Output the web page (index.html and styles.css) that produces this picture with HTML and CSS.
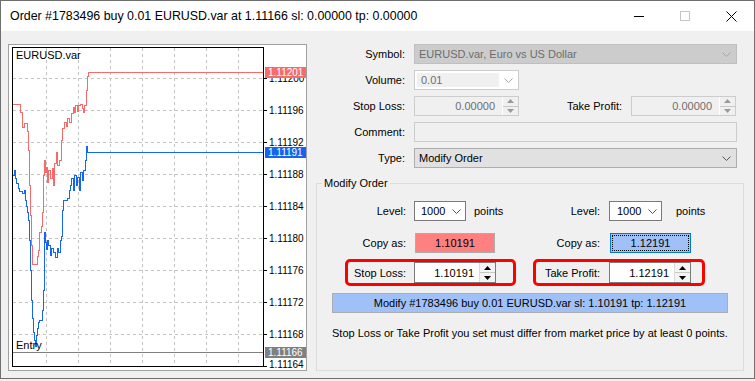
FILE: index.html
```html
<!DOCTYPE html>
<html lang="en">
<head>
  <meta charset="UTF-8">
  <meta name="viewport" content="width=device-width, initial-scale=1.0">
  <title>Order #1783496</title>
  <link rel="stylesheet" href="styles.css">
</head>
<body>
  <div class="window">
    <div class="titlebar">
      <span class="title">Order #1783496 buy 0.01 EURUSD.var at 1.11166 sl: 0.00000 tp: 0.00000</span>
      <div class="caption">
        <div class="cap-btn"><span class="min-line"></span></div>
        <div class="cap-btn"><span class="max-box"></span></div>
        <div class="cap-btn">
          <svg width="11" height="11" viewBox="0 0 11 11"><path d="M0.5 0.5 L10.5 10.5 M10.5 0.5 L0.5 10.5" stroke="#000" stroke-width="1" fill="none"/></svg>
        </div>
      </div>
    </div>

    <div class="content">
      <div class="chart">
        <svg width="297" height="325" viewBox="9 45 297 325" font-family="Liberation Sans, Arial, sans-serif" font-size="10">
          <!-- grid -->
          <g stroke="#c4c4c4" stroke-dasharray="3 3" shape-rendering="crispEdges">
            <path d="M46.5 48 V366 M78.5 48 V366 M110.5 48 V366 M142.5 48 V366 M174.5 48 V366 M206.5 48 V366 M238.5 48 V366"/>
            <path d="M13 78.5 H263 M13 110.5 H263 M13 142.5 H263 M13 174.5 H263 M13 206.5 H263 M13 238.5 H263 M13 270.5 H263 M13 302.5 H263 M13 334.5 H263"/>
          </g>
          <!-- axis ticks -->
          <g stroke="#000" shape-rendering="crispEdges">
            <path d="M263 78.5 H267 M263 110.5 H267 M263 142.5 H267 M263 174.5 H267 M263 206.5 H267 M263 238.5 H267 M263 270.5 H267 M263 302.5 H267 M263 334.5 H267 M263 366.5 H267"/>
          </g>
          <g fill="#000">
            <text x="269" y="82">1.11200</text>
            <text x="269" y="114">1.11196</text>
            <text x="269" y="146">1.11192</text>
            <text x="269" y="178">1.11188</text>
            <text x="269" y="210">1.11184</text>
            <text x="269" y="242">1.11180</text>
            <text x="269" y="274">1.11176</text>
            <text x="269" y="306">1.11172</text>
            <text x="269" y="338">1.11168</text>
            <text x="269" y="368">1.11164</text>
          </g>

          <!-- entry line -->
          <path d="M13 352.5 H263" stroke="#808080" shape-rendering="crispEdges"/>

          <!-- ask -->
          <polyline fill="none" stroke="#f86a6a" stroke-width="1" shape-rendering="crispEdges" points="13,104 20,104 20,112 22,112 22,127 24,127 24,123 27,123 27,131 28,131 28,150 29,150 29,185 30,185 30,215 31,215 31,245 32,245 32,264 37,264 37,256 38,256 38,250 39,250 39,232 41,232 41,226 42,226 42,212 43,212 43,175 44,175 44,160 45,160 45,172 46,172 46,167 47,167 47,182 48,182 48,170 50,170 50,178 52,178 52,168 53,168 53,185 54,185 54,163 56,163 56,152 57,152 57,165 59,165 59,160 61,160 61,140 62,140 62,128 64,128 64,122 66,122 66,126 67,126 67,118 69,118 69,122 71,122 71,113 73,113 73,107 74,107 74,112 75,112 75,105 77,105 77,111 78,111 78,105 80,105 80,104 82,104 82,108 83,108 83,112 84,112 84,105 86,105 86,90 87,90 87,76 88,76 88,72.5 263,72.5"/>
          <!-- bid -->
          <polyline fill="none" stroke="#1466f5" stroke-width="1" shape-rendering="crispEdges" points="13,175 14,175 14,170 15,170 15,178 16,178 16,183 18,183 18,188 19,188 19,191 22,191 22,193 24,193 24,190 25,190 25,200 26,200 26,206 27,206 27,212 28,212 28,220 29,220 29,240 30,240 30,270 31,270 31,300 32,300 32,318 33,318 33,332 34,332 34,340 35,340 35,346 36,346 36,335 37,335 37,328 38,328 38,322 39,322 39,320 42,320 42,310 43,310 43,290 44,290 44,232 45,232 45,242 46,242 46,249 47,249 47,240 48,240 48,245 50,245 50,255 51,255 51,248 53,248 53,252 55,252 55,257 57,257 57,248 58,248 58,252 60,252 60,240 61,240 61,236 62,236 62,210 63,210 63,200 67,200 67,198 69,198 69,190 70,190 70,185 71,185 71,178 73,178 73,190 74,190 74,175 76,175 76,185 77,185 77,177 79,177 79,190 80,190 80,172 82,172 82,180 83,180 83,170 85,170 85,160 86,160 86,146 87,146 87,152.5 263,152.5"/>

          <!-- frame -->
          <rect x="12.5" y="47.5" width="251" height="319" fill="none" stroke="#000" shape-rendering="crispEdges"/>

          <text x="16" y="59" fill="#000" font-size="11">EURUSD.var</text>
          <text x="16" y="349" fill="#000" font-size="11">Entry</text>

          <!-- price tags -->
          <rect x="265" y="67" width="41" height="11" fill="#f76b6b"/>
          <text x="268" y="76" fill="#fff">1.11201</text>
          <rect x="265" y="147" width="41" height="11" fill="#1464f0"/>
          <text x="268" y="156" fill="#fff">1.11191</text>
          <rect x="265" y="347" width="41" height="11" fill="#808080"/>
          <text x="268" y="356" fill="#fff">1.11166</text>
        </svg>
      </div>

      <div class="form">
        <div class="fields">
          <div class="lbl">Symbol:</div>
          <div class="combo off wide">
            <span>EURUSD.var, Euro vs US Dollar</span>
            <svg class="chev" width="9" height="5" viewBox="0 0 9 5"><path d="M0.5 0.5 L4.5 4.5 L8.5 0.5" stroke="#a6a6a6" fill="none"/></svg>
          </div>

          <div class="lbl">Volume:</div>
          <div class="vol">
            <span class="vol-text">0.01</span>
            <svg class="chev" width="9" height="5" viewBox="0 0 9 5"><path d="M0.5 0.5 L4.5 4.5 L8.5 0.5" stroke="#a6a6a6" fill="none"/></svg>
          </div>
          <div></div><div></div>

          <div class="lbl">Stop Loss:</div>
          <div class="spin off">
            <span class="v">0.00000</span>
            <span class="btns">
              <span><svg width="7" height="4" viewBox="0 0 7 4"><path d="M3.5 0 L7 4 H0 Z" fill="#9a9a9a"/></svg></span>
              <span><svg width="7" height="4" viewBox="0 0 7 4"><path d="M0 0 H7 L3.5 4 Z" fill="#9a9a9a"/></svg></span>
            </span>
          </div>
          <div class="lbl">Take Profit:</div>
          <div class="spin off">
            <span class="v">0.00000</span>
            <span class="btns">
              <span><svg width="7" height="4" viewBox="0 0 7 4"><path d="M3.5 0 L7 4 H0 Z" fill="#9a9a9a"/></svg></span>
              <span><svg width="7" height="4" viewBox="0 0 7 4"><path d="M0 0 H7 L3.5 4 Z" fill="#9a9a9a"/></svg></span>
            </span>
          </div>

          <div class="lbl">Comment:</div>
          <div class="comment wide"></div>

          <div class="lbl">Type:</div>
          <div class="combo wide">
            <span>Modify Order</span>
            <svg class="chev" width="9" height="5" viewBox="0 0 9 5"><path d="M0.5 0.5 L4.5 4.5 L8.5 0.5" stroke="#555" fill="none"/></svg>
          </div>
        </div>

        <fieldset class="modify">
          <legend>Modify Order</legend>

          <div class="row">
            <div class="half-l">
              <span class="cap">Level:</span>
              <div class="sel">
                <span>1000</span>
                <svg class="chev" width="9" height="5" viewBox="0 0 9 5"><path d="M0.5 0.5 L4.5 4.5 L8.5 0.5" stroke="#555" fill="none"/></svg>
              </div>
              <span class="pts">points</span>
            </div>
            <div class="half-r">
              <span class="cap">Level:</span>
              <div class="sel">
                <span>1000</span>
                <svg class="chev" width="9" height="5" viewBox="0 0 9 5"><path d="M0.5 0.5 L4.5 4.5 L8.5 0.5" stroke="#555" fill="none"/></svg>
              </div>
              <span class="pts">points</span>
            </div>
          </div>

          <div class="row copy-row">
            <div class="half-l">
              <span class="cap">Copy as:</span>
              <div class="copy red">1.10191</div>
            </div>
            <div class="half-r">
              <span class="cap">Copy as:</span>
              <div class="copy blue"><span class="focus">1.12191</span></div>
            </div>
          </div>

          <div class="row mark-row">
            <div class="half-l">
              <div class="mark">
                <span class="mcap">Stop Loss:</span>
                <div class="spin">
                  <span class="v">1.10191</span>
                  <span class="btns">
                    <span><svg width="7" height="4" viewBox="0 0 7 4"><path d="M3.5 0 L7 4 H0 Z" fill="#000"/></svg></span>
                    <span><svg width="7" height="4" viewBox="0 0 7 4"><path d="M0 0 H7 L3.5 4 Z" fill="#000"/></svg></span>
                  </span>
                </div>
              </div>
            </div>
            <div class="half-r">
              <div class="mark">
                <span class="mcap">Take Profit:</span>
                <div class="spin">
                  <span class="v">1.12191</span>
                  <span class="btns">
                    <span><svg width="7" height="4" viewBox="0 0 7 4"><path d="M3.5 0 L7 4 H0 Z" fill="#000"/></svg></span>
                    <span><svg width="7" height="4" viewBox="0 0 7 4"><path d="M0 0 H7 L3.5 4 Z" fill="#000"/></svg></span>
                  </span>
                </div>
              </div>
            </div>
          </div>

          <div class="modify-btn">Modify #1783496 buy 0.01 EURUSD.var sl: 1.10191 tp: 1.12191</div>

          <p class="note">Stop Loss or Take Profit you set must differ from market price by at least 0 points.</p>
        </fieldset>
      </div>
    </div>
  </div>
</body>
</html>
```

FILE: styles.css
```css
* {
  box-sizing: border-box;
}

html, body {
  margin: 0;
  padding: 0;
}

body {
  background: #f0f0f0;
  font-family: "Liberation Sans", Arial, sans-serif;
  font-size: 11px;
  color: #000;
}

.window {
  width: 755px;
  height: 379px;
  border: 1px solid #6f6f6f;
  background: #f0f0f0;
  display: flex;
  flex-direction: column;
}

/* title bar */
.titlebar {
  height: 30px;
  flex-shrink: 0;
  background: #fff;
  display: flex;
  align-items: center;
  padding-left: 9px;
}

.title {
  font-size: 12.4px;
  color: #000;
}

.caption {
  margin-left: auto;
  display: flex;
  height: 30px;
}

.cap-btn {
  width: 46px;
  height: 30px;
  display: flex;
  align-items: center;
  justify-content: center;
}

.min-line {
  width: 10px;
  border-top: 1px solid #000;
}

.max-box {
  width: 10px;
  height: 10px;
  border: 1px solid #c4c4c4;
}

/* layout */
.content {
  display: flex;
  gap: 9px;
  padding: 13px 0 0 7px;
}

.chart {
  width: 299px;
  height: 327px;
  background: #fff;
  border: 1px solid #a0a0a0;
}

.chart svg {
  display: block;
}

.form {
  width: 428px;
  display: flex;
  flex-direction: column;
}

/* top fields */
.fields {
  display: grid;
  grid-template-columns: 98px 105px 112px 106px;
  grid-auto-rows: 20px;
  row-gap: 6px;
}

.lbl {
  display: flex;
  align-items: center;
  justify-content: flex-end;
  padding-right: 9px;
  white-space: nowrap;
}

.wide {
  grid-column: 2 / 5;
}

.chev {
  margin-left: auto;
  flex-shrink: 0;
}

.combo {
  display: flex;
  align-items: center;
  padding: 0 5px 0 4px;
  background: #e1e1e1;
  border: 1px solid #adadad;
}

.combo.off {
  background: #cccccc;
  border-color: #bfbfbf;
  color: #6d6d6d;
}

.vol {
  display: flex;
  align-items: center;
  padding: 2px 5px 2px 2px;
  background: #fff;
  border: 1px solid #cccccc;
}

.vol-text {
  width: 82px;
  height: 100%;
  display: flex;
  align-items: center;
  padding-left: 4px;
  background: #f0f0f0;
  color: #6d6d6d;
}

.comment {
  background: #f0f0f0;
  border: 1px solid #cccccc;
}

/* spin edits */
.spin {
  display: flex;
  width: 82px;
  height: 21px;
  background: #fff;
  border: 1px solid #7a7a7a;
}

.spin .v {
  flex: 1;
  display: flex;
  align-items: center;
  justify-content: flex-end;
  padding-right: 5px;
}

.spin .btns {
  width: 16px;
  display: flex;
  flex-direction: column;
  border-left: 1px solid #dadada;
  background: #f4f4f4;
}

.spin .btns span {
  flex: 1;
  display: flex;
  align-items: center;
  justify-content: center;
}

.spin .btns span + span {
  border-top: 1px solid #c8c8c8;
}

.spin.off {
  width: 105px;
  height: 20px;
  background: #f0f0f0;
  border-color: #cccccc;
  color: #6d6d6d;
}

.spin.off .v {
  padding-right: 7px;
}

.spin.off .btns {
  background: #f0f0f0;
  border-left-color: #fff;
}

/* modify group */
.modify {
  margin: 8px 0 0;
  padding: 11px 0 0;
  height: 195px;
  border: 1px solid #dcdcdc;
}

.modify legend {
  margin-left: 5px;
  padding: 0 2px;
  line-height: 14px;
}

.row {
  display: flex;
  align-items: center;
  height: 20px;
}

.half-l {
  width: 203px;
  display: flex;
  align-items: center;
}

.half-r {
  flex: 1;
  display: flex;
  align-items: center;
}

.cap {
  text-align: right;
  white-space: nowrap;
}

.half-l .cap {
  width: 97px;
  padding-right: 8px;
}

.half-r .cap {
  width: 89px;
  padding-right: 9px;
}

.sel {
  display: flex;
  align-items: center;
  width: 52px;
  height: 20px;
  padding: 0 4px 0 6px;
  background: #fff;
  border: 1px solid #7a7a7a;
}

.half-r .sel {
  width: 53px;
  padding-left: 7px;
}

.half-l .pts {
  margin-left: 8px;
}

.half-r .pts {
  margin-left: 14px;
}

.copy-row {
  margin-top: 12px;
}

.copy {
  width: 80px;
  height: 20px;
  display: flex;
  align-items: center;
  justify-content: center;
  border: 1px solid #adadad;
}

.half-l .copy {
  margin-left: 1px;
}

.half-r .copy {
  width: 81px;
  margin-left: 1px;
}

.copy.red {
  background: #ff8080;
}

.copy.blue {
  background: #a0c0f8;
  border-color: #0078d7;
  padding: 1px;
}

.copy .focus {
  width: 100%;
  height: 100%;
  display: flex;
  align-items: center;
  justify-content: center;
  border: 1px dotted #000;
}

.mark-row {
  margin-top: 6px;
  height: 27px;
}

.mark {
  display: flex;
  align-items: center;
  height: 27px;
  border: 3px solid #ff0000;
  border-radius: 5px;
}

.half-l .mark {
  margin-left: 28px;
  padding: 0 17px 0 8px;
}

.half-r .mark {
  margin-left: 13px;
  padding: 0 11px 0 8px;
}

.mcap {
  display: flex;
  justify-content: flex-end;
  white-space: nowrap;
}

.half-l .mcap {
  width: 50px;
  margin-right: 8px;
}

.half-r .mcap {
  width: 56px;
  margin-right: 9px;
}

.modify-btn {
  margin: 7px 0 0 15px;
  width: 396px;
  height: 20px;
  display: flex;
  align-items: center;
  justify-content: center;
  background: #a0c0f8;
  border: 1px solid #adadad;
}

.note {
  margin: 13px 0 0 15px;
  line-height: 14px;
}
```
